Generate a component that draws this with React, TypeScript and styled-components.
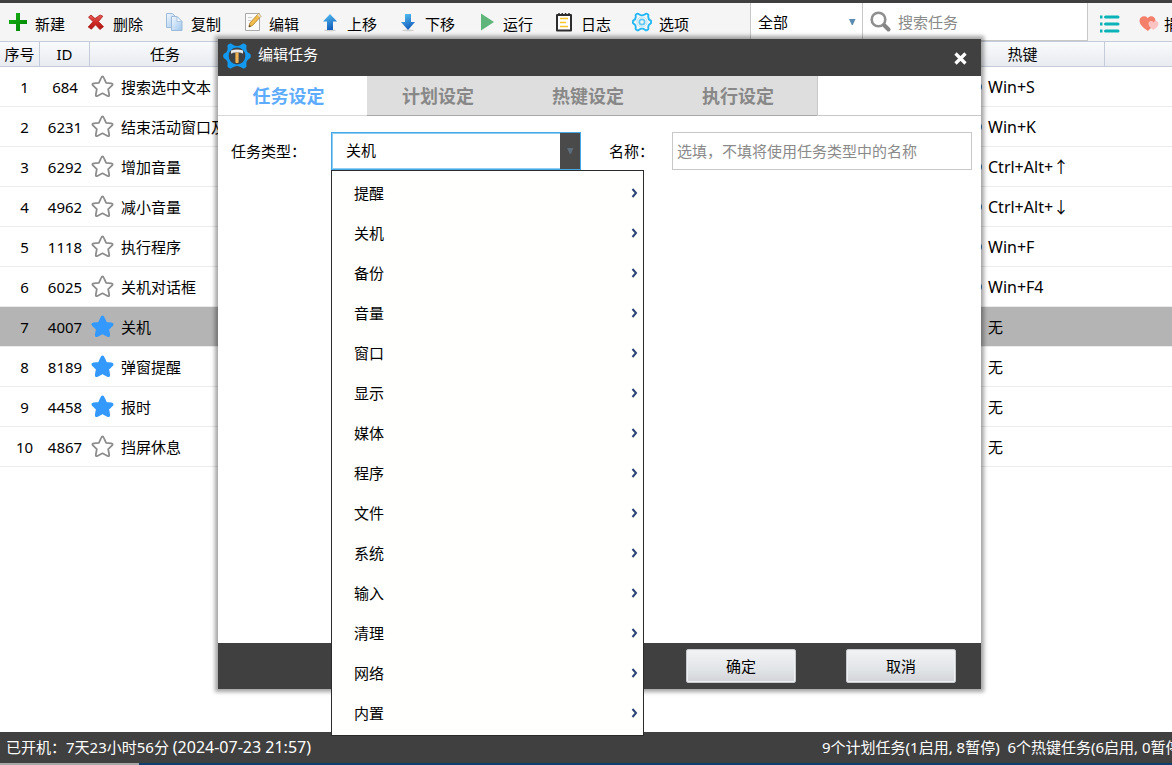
import React from "react";
import styled, { createGlobalStyle } from "styled-components";

const GlobalStyle = createGlobalStyle`
  *, *::before, *::after { box-sizing: border-box; }
  body { margin: 0; background: #fff; overflow: hidden; }
  body, button, input, select {
    font-family: "Noto Sans", "Noto Sans CJK SC", sans-serif;
    font-size: 15px;
    line-height: 20px;
    color: #000;
  }
  button, input, select { border: 0; padding: 0; margin: 0; background: none; border-radius: 0; outline: 0; }
`;

const Window = styled.div`
  position: relative;
  display: flex;
  flex-direction: column;
  min-height: 100vh;
  overflow: hidden;
  border-top: 3px solid #404040;
`;

const Toolbar = styled.header`
  display: flex;
  height: 38px;
  background: #f5f5f5;
  white-space: nowrap;
`;

const ToolGroup = styled.div`
  display: flex;
  flex: 1 0 auto;
  padding-left: 8px;
`;

const ToolButton = styled.button`
  display: flex;
  align-items: center;
  gap: 7px;
  width: 78px;
  flex: none;

  svg { display: block; flex: none; }
  span { padding-top: 4px; }
`;

const FilterBox = styled.div`
  display: flex;
  align-items: center;
  width: 113px;
  flex: none;
  padding: 0 6px 0 7px;
  background: #fff;
  border-left: 1px solid #c8c8c8;
  border-right: 1px solid #c8c8c8;

  select { flex: 1; appearance: none; }
`;

const SearchBox = styled.label`
  display: flex;
  align-items: center;
  gap: 7px;
  width: 225px;
  flex: none;
  padding-left: 7px;
  background: #fff;
  border-right: 1px solid #c8c8c8;
  border-bottom: 1px solid #c8c8c8;

  input { flex: 1; min-width: 0; }
  input::placeholder { color: #8a8a8a; opacity: 1; }
`;

const ToolbarEnd = styled.div`
  display: flex;
  align-items: center;
  gap: 19px;
  width: 84px;
  flex: none;
  padding-left: 11px;
  overflow: hidden;

  button { display: flex; align-items: center; gap: 5px; flex: none; padding-top: 4px; }
`;

const TaskTable = styled.table`
  width: 100%;
  table-layout: fixed;
  border-collapse: separate;
  border-spacing: 0;
  white-space: nowrap;
`;

const HeadCell = styled.th`
  height: 26px;
  padding: 0;
  font-weight: 400;
  background: linear-gradient(#f9fafc, #e8ebf0);
  border-top: 1px solid #c3ccd8;
  border-bottom: 1px solid #c3ccd8;
  border-right: 1px solid #c3ccd8;

  &:last-child { border-right: 0; }
`;

const Row = styled.tr<{ $selected?: boolean }>`
  background: ${(p) => (p.$selected ? "#b4b4b4" : "#fff")};
`;

const Cell = styled.td<{ $align?: "center" }>`
  height: 40px;
  padding: 0;
  border-bottom: 1px solid #ebebeb;
  text-align: ${(p) => p.$align ?? "left"};

  &:first-child { padding-left: 9px; }
`;

const CellContent = styled.div`
  display: flex;
  align-items: center;
  gap: 6px;
  padding: 0 1px;
`;

const HotkeyContent = styled.div`
  display: flex;
  align-items: center;
  gap: 6px;
  padding-left: 21px;
`;

const Switch = styled.span<{ $on: boolean }>`
  width: 20px;
  height: 12px;
  border-radius: 6px;
  background: ${(p) => (p.$on ? "#2f6bb5" : "transparent")};
`;

const KeyText = styled.kbd<{ $empty: boolean }>`
  font-family: inherit;
  font-size: ${(p) => (p.$empty ? 15 : 16)}px;
`;

const StatusBar = styled.footer`
  display: grid;
  grid-template-columns: 1fr 350px;
  margin-top: auto;
  height: 31px;
  padding-left: 6px;
  background: #404040;
  color: #fff;
  line-height: 30px;
  white-space: pre;
  overflow: hidden;

  time { font-size: 16px; }
`;

const DesktopEdge = styled.div`
  height: 2px;
  background: linear-gradient(to right, #a8a8a8 139px, #0f3f6e 139px);
`;

const Dialog = styled.section`
  position: absolute;
  top: 36px;
  left: 218px;
  width: 763px;
  background: #fff;
  box-shadow: 0 0 4px 3px rgba(0, 0, 0, 0.36);
`;

const TitleBar = styled.div`
  display: flex;
  height: 37px;
  padding: 3px 14px 0 5px;
  background: #404040;
  color: #fff;

  h1 { flex: 1; margin: 0 0 0 7px; font-size: 15px; font-weight: 400; line-height: 25px; }
  button { display: flex; align-items: center; height: 32px; }
`;

const Tabs = styled.div`
  display: grid;
  grid-template-columns: 149px repeat(3, 150px) 1fr;
  height: 40px;

  &::after { content: ""; border-bottom: 1px solid #c8c8c8; border-left: 1px solid #c8c8c8; }
`;

const Tab = styled.button<{ $active?: boolean }>`
  padding-right: 8px;
  font-size: 18px;
  font-weight: 700;
  color: ${(p) => (p.$active ? "#5eacff" : "#888")};
  background: ${(p) => (p.$active ? "#fff" : "#dedede")};
  border-bottom: 1px solid ${(p) => (p.$active ? "#d8d8d8" : "#a8a8a8")};
`;

const Form = styled.div`
  display: flex;
  align-items: flex-start;
  min-height: 527px;
  padding: 16px 9px 0 13px;
`;

const Label = styled.label<{ $width: number }>`
  width: ${(p) => p.$width}px;
  line-height: 38px;
  white-space: nowrap;
`;

const Combo = styled.div`
  position: relative;
  width: 250px;
  margin-right: 28px;
`;

const ComboField = styled.div`
  display: flex;
  height: 38px;
  border: 1px solid #46a8e6;
  box-shadow: inset 0 0 0 1px #8fcdf5;

  select { flex: 1; padding: 0 0 2px 14px; appearance: none; }
`;

const ComboArrow = styled.span`
  display: flex;
  align-items: center;
  justify-content: center;
  width: 20px;
  background: #4a4a4a;
`;

const NameInput = styled.input`
  flex: 1;
  min-width: 0;
  height: 38px;
  padding: 0 4px;
  border: 1px solid #c8c8c8;

  &::placeholder { color: #8a8a8a; opacity: 1; }
`;

const Menu = styled.ul`
  position: absolute;
  top: 38px;
  left: 0;
  z-index: 1;
  width: 313px;
  margin: 0;
  padding: 2px 0;
  list-style: none;
  background: #fffffd;
  border: 1px solid #2b2b2b;
`;

const MenuItem = styled.button`
  display: flex;
  align-items: center;
  justify-content: space-between;
  width: 100%;
  height: 40px;
  padding: 0 5px 0 22px;
`;

const DialogFooter = styled.div`
  display: flex;
  justify-content: flex-end;
  gap: 50px;
  height: 46px;
  padding: 6px 25px;
  background: #404040;
`;

const DialogButton = styled.button`
  width: 110px;
  background: linear-gradient(#f2f3f5, #e2e5e8 60%, #d2d3d8);
  border: 1px solid #c6c9ce;
  border-radius: 2px;
  box-shadow: inset 0 0 0 1px #eef0f2;
`;

const icon = { width: 20, height: 20, viewBox: "0 0 20 20", "aria-hidden": true } as const;

const GEAR =
  "M6.500 1.800Q8 1 9.500 2.400Q14 5.600 18.500 2.400Q20 1 21.500 1.800L23 2.800Q24 3.600 23.400 5.200Q22.800 9.600 26.600 11.600Q28 12.400 27.800 14Q28 15.600 26.600 16.400Q22.800 18.400 23.400 22.800Q24 24.400 23 25.200L21.500 26.200Q20 27 18.500 25.600Q14 22.400 9.500 25.600Q8 27 6.500 26.200L5 25.200Q4 24.400 4.600 22.800Q5.200 18.400 1.400 16.400Q0 15.600 .2 14Q0 12.400 1.400 11.600Q5.200 9.600 4.600 5.200Q4 3.600 5 2.800Z";

const AddIcon = () => (
  <svg {...icon}>
    <defs>
      <linearGradient id="add" x2="1" y2="1"><stop stopColor="#19b519" /><stop offset="1" stopColor="#008000" /></linearGradient>
    </defs>
    <path fill="url(#add)" d="M8 1h4v7h7v4h-7v7H8v-7H1V8h7z" />
  </svg>
);
const DeleteIcon = () => (
  <svg {...icon}>
    <defs>
      <linearGradient id="del" x2="0" y2="1"><stop stopColor="#e8605c" /><stop offset=".5" stopColor="#cf2b28" /><stop offset="1" stopColor="#b01512" /></linearGradient>
    </defs>
    <path fill="url(#del)" stroke="#a81a18" strokeWidth=".8" strokeLinejoin="round" d="M5 3l4 3.600L14 3l2.800 1.200-4.300 5.300 5 5.200-3.600 2.800-4.300-4.700L5.400 17.200 2.200 15l4.900-5.400-4.600-4.400z" />
  </svg>
);
const CopyIcon = () => (
  <svg {...icon}>
    <defs>
      <linearGradient id="copy" x2="1" y2="1"><stop stopColor="#f2f8fe" /><stop offset="1" stopColor="#9fc6ee" /></linearGradient>
    </defs>
    <path fill="url(#copy)" stroke="#9dbbd8" d="M2.500 1.500h6l4 4v10h-10z" />
    <path fill="url(#copy)" stroke="#9dbbd8" d="M7.500 4.500h5.500l5 5v9H7.500z" />
    <path fill="#eef6fd" stroke="#9dbbd8" strokeWidth=".8" d="M13 4.500v5h5z" />
  </svg>
);
const EditIcon = () => (
  <svg {...icon}>
    <path fill="#fbfbfb" stroke="#a9a9a9" d="M3.500 1.500h14v17h-14z" />
    <path stroke="#cfcfcf" d="M6 5.500h4M6 8.500h3" />
    <path fill="#f1bd4c" stroke="#a8792a" strokeWidth=".8" d="M16.500 1.500l2.700 2.500-8.700 9.500-3.600 1.500.9-3.900z" />
    <path fill="#333" d="M7 15l.5-2 1.500 1.300z" />
    <path fill="#e8dcc0" d="M16.500 1.500l2.700 2.500-1.500 1.600L15 3.100z" />
  </svg>
);
const ArrowIcon = ({ down }: { down?: boolean }) => (
  <svg {...icon}>
    <defs>
      <linearGradient id="arrow" x2=".4" y2="1"><stop stopColor="#58c6f6" /><stop offset="1" stopColor="#1560bd" /></linearGradient>
    </defs>
    <ellipse cx="10" cy="18.400" rx="6" ry=".8" fill="#cfcfcf" />
    <path fill="url(#arrow)" d={down ? "M7 2h6v8h4l-7 8-7-8h4z" : "M10 2l7 7.500h-4V18H7V9.500H3z"} />
  </svg>
);
const RunIcon = () => (
  <svg {...icon}><path fill="#5fb57a" d="M5 1.500L18 10 5 18.500z" /></svg>
);
const LogIcon = () => (
  <svg {...icon}>
    <path fill="#fff" stroke="#2d2d2d" strokeWidth="2" strokeLinejoin="round" d="M3 3h14v15.500H3z" />
    <path stroke="#2d2d2d" strokeWidth="1.500" d="M5 1v3M8.300 1v3M11.600 1v3M15 1v3" />
    <path stroke="#f9c62a" strokeWidth="1.600" d="M6 6.500h8M6 10.500h6M6 14.500h8" />
  </svg>
);
const OptionsIcon = () => (
  <svg width="20" height="20" viewBox="-1 -1 30 30" aria-hidden>
    <path d={GEAR} fill="none" stroke="#22b8f6" strokeWidth="2.800" strokeLinejoin="round" />
    <circle cx="14" cy="14" r="7.600" fill="none" stroke="#a6def8" strokeWidth="1.200" />
    <circle cx="14" cy="14" r="4" fill="none" stroke="#5ccaf8" strokeWidth="2.600" />
  </svg>
);
const SearchIcon = () => (
  <svg width="21" height="21" viewBox="0 0 21 21" aria-hidden>
    <circle cx="8.500" cy="8.500" r="6.800" fill="#fff" stroke="#8f8f8f" strokeWidth="2.600" />
    <path stroke="#858585" strokeWidth="4" strokeLinecap="round" d="M14.500 14.500l4 4" />
  </svg>
);
const ListIcon = () => (
  <svg width="21" height="20" viewBox="0 0 21 20" aria-hidden>
    <path stroke="#0ab3b8" strokeWidth="3" strokeLinecap="round" d="M6.500 3h12.500M6.500 10h12.500M6.500 17h12.500" />
    <path stroke="#0ab3b8" strokeWidth="3" d="M1 3h2.500M1 10h2.500M1 17h2.500" />
  </svg>
);
const HeartsIcon = () => (
  <svg {...icon}>
    <path fill="#f4806c" d="M9 17C4 13.500 .5 10.500 .5 6.800 .5 2 6.500.8 8.800 4.200 11 .8 16.500 2 16.500 6.800 16.500 10.500 12 14 9 17z" />
    <path fill="#fcc3c3" d="M14.500 16c-3-2-5-3.700-5-6.200 0-3.200 3.600-3.700 5-1.400 1.400-2.300 5-1.800 5 1.400 0 2.500-2.500 4.500-5 6.200z" />
  </svg>
);
const StarIcon = ({ filled }: { filled: boolean }) => (
  <svg width="24" height="24" viewBox="0 0 24 24" aria-hidden>
    <path
      d="M11.500 1.500q.8 0 1.400 1.500l2.200 4.800 5.200.6q2.200.4.800 2l-3.900 3.700 1 5.500q.3 2.200-1.600 1.400L11.500 18.300 6.400 21q-1.900.8-1.600-1.400l1-5.500-3.900-3.700q-1.400-1.600.8-2l5.200-.6L10.100 3q.6-1.500 1.400-1.500z"
      fill={filled ? "#3399ff" : "#fff"}
      stroke={filled ? "#3399ff" : "#8c8c8c"}
      strokeWidth="1.800"
      strokeLinejoin="round"
    />
  </svg>
);
const AppIcon = () => (
  <svg width="28" height="28" viewBox="0 0 28 28" aria-hidden>
    <path fill="#129af0" d={GEAR} />
    <circle cx="14" cy="14" r="8.400" fill="#3d4247" />
    <path fill="#e9e9e9" d="M8 8.500q6-2 12 0v3.200q-2-1.400-4.500-1.200h-3Q10 10.500 8 11.700z" />
    <path fill="#f0b352" d="M12.400 10.500h3.200v10q-1.600 1.200-3.200 0z" />
  </svg>
);
const CloseIcon = () => (
  <svg width="13" height="13" viewBox="0 0 13 13" aria-hidden>
    <path stroke="#fff" strokeWidth="3.200" d="M1.500 1.500l10 10M11.500 1.500l-10 10" />
  </svg>
);
const DownIcon = ({ color }: { color: string }) => (
  <svg width="8" height="8" viewBox="0 0 8 8" aria-hidden><path fill={color} d="M1 1h6.500L4.800 7h-1z" /></svg>
);
const ChevronIcon = () => (
  <svg width="7" height="10" viewBox="0 0 7 10" aria-hidden>
    <path fill="none" stroke="#2b4377" strokeWidth="2" d="M1.500 1L5 5 1.500 9" />
  </svg>
);

const tools: [string, React.ReactNode][] = [
  ["新建", <AddIcon />],
  ["删除", <DeleteIcon />],
  ["复制", <CopyIcon />],
  ["编辑", <EditIcon />],
  ["上移", <ArrowIcon />],
  ["下移", <ArrowIcon down />],
  ["运行", <RunIcon />],
  ["日志", <LogIcon />],
  ["选项", <OptionsIcon />],
];

const tasks = [
  { id: 684, name: "搜索选中文本", star: false, hotkey: "Win+S" },
  { id: 6231, name: "结束活动窗口及", star: false, hotkey: "Win+K" },
  { id: 6292, name: "增加音量", star: false, hotkey: "Ctrl+Alt+↑" },
  { id: 4962, name: "减小音量", star: false, hotkey: "Ctrl+Alt+↓" },
  { id: 1118, name: "执行程序", star: false, hotkey: "Win+F" },
  { id: 6025, name: "关机对话框", star: false, hotkey: "Win+F4" },
  { id: 4007, name: "关机", star: true, hotkey: "无" },
  { id: 8189, name: "弹窗提醒", star: true, hotkey: "无" },
  { id: 4458, name: "报时", star: true, hotkey: "无" },
  { id: 4867, name: "挡屏休息", star: false, hotkey: "无" },
];

const tabs = ["任务设定", "计划设定", "热键设定", "执行设定"];
const taskTypes = ["提醒", "关机", "备份", "音量", "窗口", "显示", "媒体", "程序", "文件", "系统", "输入", "清理", "网络", "内置"];

export default function App() {
  return (
    <>
      <GlobalStyle />
      <Window>
        <Toolbar>
          <ToolGroup>
            {tools.map(([label, glyph]) => (
              <ToolButton key={label} type="button">
                {glyph}
                <span>{label}</span>
              </ToolButton>
            ))}
          </ToolGroup>
          <FilterBox>
            <select aria-label="分类"><option>全部</option></select>
            <DownIcon color="#5b8bb0" />
          </FilterBox>
          <SearchBox>
            <SearchIcon />
            <input type="text" placeholder="搜索任务" aria-label="搜索任务" />
          </SearchBox>
          <ToolbarEnd>
            <button type="button" aria-label="列表"><ListIcon /></button>
            <button type="button"><HeartsIcon />捐赠</button>
          </ToolbarEnd>
        </Toolbar>

        <TaskTable>
          <colgroup>
            <col style={{ width: 40 }} />
            <col style={{ width: 50 }} />
            <col style={{ width: 151 }} />
            <col />
            <col style={{ width: 164 }} />
            <col style={{ width: 67 }} />
          </colgroup>
          <thead>
            <tr>
              <HeadCell>序号</HeadCell>
              <HeadCell>ID</HeadCell>
              <HeadCell>任务</HeadCell>
              <HeadCell />
              <HeadCell>热键</HeadCell>
              <HeadCell />
            </tr>
          </thead>
          <tbody>
            {tasks.map((task, i) => (
              <Row key={task.id} $selected={task.id === 4007}>
                <Cell $align="center">{i + 1}</Cell>
                <Cell $align="center">{task.id}</Cell>
                <Cell>
                  <CellContent><StarIcon filled={task.star} />{task.name}</CellContent>
                </Cell>
                <Cell />
                <Cell>
                  <HotkeyContent>
                    <Switch $on={task.hotkey !== "无"} />
                    <KeyText $empty={task.hotkey === "无"}>{task.hotkey}</KeyText>
                  </HotkeyContent>
                </Cell>
                <Cell />
              </Row>
            ))}
          </tbody>
        </TaskTable>

        <StatusBar>
          <span>已开机：7天23小时56分 <time dateTime="2024-07-23T21:57">(2024-07-23 21:57)</time></span>
          <span>9个计划任务(1启用, 8暂停)  6个热键任务(6启用, 0暂停)</span>
        </StatusBar>
        <DesktopEdge />

        <Dialog role="dialog" aria-labelledby="dialog-title">
          <TitleBar>
            <AppIcon />
            <h1 id="dialog-title">编辑任务</h1>
            <button type="button" aria-label="关闭"><CloseIcon /></button>
          </TitleBar>
          <Tabs role="tablist">
            {tabs.map((tab, i) => (
              <Tab key={tab} type="button" role="tab" aria-selected={i === 0} $active={i === 0}>{tab}</Tab>
            ))}
          </Tabs>
          <Form>
            <Label htmlFor="task-type" $width={100}>任务类型：</Label>
            <Combo>
              <ComboField>
                <select id="task-type" defaultValue="关机">
                  {taskTypes.map((type) => <option key={type}>{type}</option>)}
                </select>
                <ComboArrow><DownIcon color="#5c6e7c" /></ComboArrow>
              </ComboField>
              <Menu role="menu">
                {taskTypes.map((type) => (
                  <li key={type} role="none">
                    <MenuItem type="button" role="menuitem" aria-haspopup="menu">{type}<ChevronIcon /></MenuItem>
                  </li>
                ))}
              </Menu>
            </Combo>
            <Label htmlFor="task-name" $width={63}>名称：</Label>
            <NameInput id="task-name" type="text" placeholder="选填，不填将使用任务类型中的名称" />
          </Form>
          <DialogFooter>
            <DialogButton type="button">确定</DialogButton>
            <DialogButton type="button">取消</DialogButton>
          </DialogFooter>
        </Dialog>
      </Window>
    </>
  );
}
